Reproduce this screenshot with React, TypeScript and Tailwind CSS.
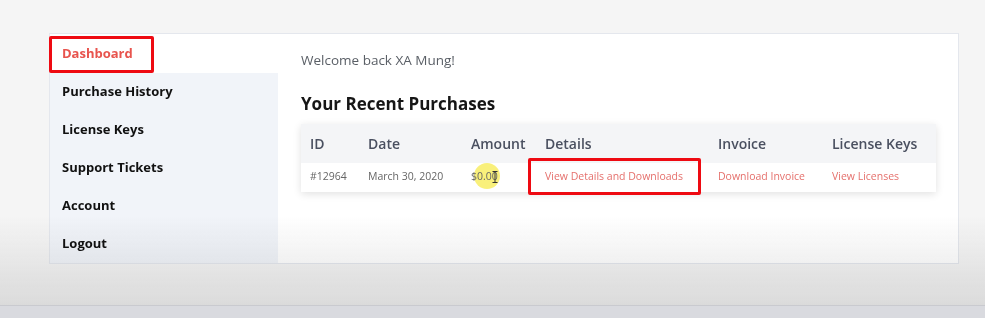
const navItems = ["Purchase History", "License Keys", "Support Tickets", "Account", "Logout"];

const cols = [
  { label: "ID", w: "w-[58px]" },
  { label: "Date", w: "w-[103px]" },
  { label: "Amount", w: "w-[74px]" },
  { label: "Details", w: "w-[173px]" },
  { label: "Invoice", w: "w-[114px]" },
  { label: "License Keys", w: "flex-1" },
];

export default function App() {
  return (
    <div className="relative w-[985px] h-[318px] overflow-hidden bg-[#f5f5f5] font-['Open_Sans',sans-serif]">
      <div className="flex h-[305px] flex-col pt-[33px] pl-[49px]">
        <div className="flex h-[231px] w-[910px] border border-[#e4e7ed] bg-white">
          {/* sidebar */}
          <nav className="flex w-[228px] flex-col bg-[#f1f4f9]">
            <div className="relative flex h-[39px] items-center bg-white pl-[12px]">
              <span className="text-[13px] font-bold text-[#e8544e]">Dashboard</span>
              <div className="absolute left-[-1px] top-[2px] h-[37px] w-[105px] rounded-[2px] border-[3px] border-[#ee0a12]" />
            </div>
            {navItems.map((item) => (
              <div key={item} className="flex h-[38px] items-center pl-[12px]">
                <span className="text-[13px] font-bold text-[#111]">{item}</span>
              </div>
            ))}
          </nav>

          {/* main */}
          <main className="flex-1 pl-[23px] pt-[16px]">
            <p className="text-[13.5px] text-[#5a5f66]">Welcome back XA Mung!</p>
            <h2 className="mt-[21px] text-[17px] font-bold text-[#161616]">Your Recent Purchases</h2>
            <div className="mt-[7px] w-[635px] shadow-[0_2px_8px_rgba(0,0,0,0.12)]">
              <div className="flex h-[39px] items-center bg-[#f4f5f7] pl-[9px]">
                {cols.map((c) => (
                  <div key={c.label} className={`${c.w} text-[14px] font-semibold text-[#4a5060]`}>
                    {c.label}
                  </div>
                ))}
              </div>
              <div className="relative flex h-[29px] items-center bg-white pl-[9px] text-[10.5px]">
                <div className="w-[58px] text-[#666]">#12964</div>
                <div className="w-[103px] text-[#666]">March 30, 2020</div>
                <div className="relative w-[74px] text-[#666]">
                  <span className="absolute left-[3px] top-[-6px] h-[26px] w-[26px] rounded-full bg-[#f8ec5a]/80" />
                  <span className="relative">$0.00</span>
                  <svg className="absolute left-[21px] top-[2px]" width="6" height="12" viewBox="0 0 6 12">
                    <path d="M0.5 0.5h5M3 0.5v11M0.5 11.5h5" stroke="#333" strokeWidth="1" fill="none" />
                  </svg>
                </div>
                <div className="relative w-[173px] text-[#e5706c]">
                  View Details and Downloads
                  <div className="absolute left-[-17px] top-[-11px] h-[37px] w-[173px] rounded-[2px] border-[3px] border-[#ee0a12]" />
                </div>
                <div className="w-[114px] text-[#e5706c]">Download Invoice</div>
                <div className="flex-1 text-[#e5706c]">View Licenses</div>
              </div>
            </div>
          </main>
        </div>
      </div>
      {/* video fade over the lower part */}
      <div className="pointer-events-none absolute left-0 top-[215px] h-[90px] w-full bg-gradient-to-b from-white/0 to-[#e4e4e4] mix-blend-multiply" />
      <div className="absolute bottom-0 left-0 h-[13px] w-full border-t border-[#c9cacf] bg-[#d9dadf]" />
    </div>
  );
}
